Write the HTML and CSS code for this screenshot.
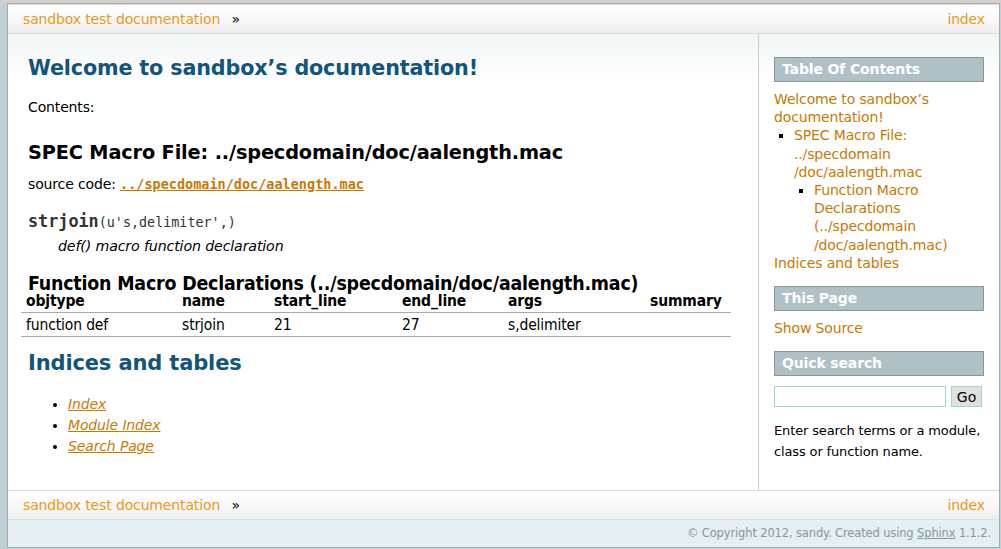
FILE: index.html
```html
<!DOCTYPE html>
<html>
<head>
<meta charset="utf-8">
<title>Welcome to sandbox's documentation! — sandbox test documentation</title>
<link rel="stylesheet" href="styles.css">
</head>
<body>
<div class="related">
  <ul>
    <li class="right"><a href="#">index</a></li>
    <li><a href="#">sandbox test documentation</a> &raquo;</li>
  </ul>
</div>
<div class="document">
  <div class="bodywrapper">
    <div class="body">
      <h1 class="title">Welcome to sandbox’s documentation!</h1>
      <p class="contents-label">Contents:</p>
      <h2 class="spec">SPEC Macro File: ../specdomain/doc/aalength.mac</h2>
      <p class="source">source code: <a href="#" class="tt-link">../specdomain/doc/aalength.mac</a></p>
      <dl class="function">
        <dt><span class="fname">strjoin</span><span class="fargs">(u's,delimiter',)</span></dt>
        <dd>def() macro function declaration</dd>
      </dl>
      <h3 class="decl">Function Macro Declarations (../specdomain/doc/aalength.mac)</h3>
      <table class="decl-table">
        <colgroup>
          <col class="c1"><col class="c2"><col class="c3"><col class="c4"><col class="c5"><col class="c6">
        </colgroup>
        <thead>
          <tr><th>objtype</th><th>name</th><th>start_line</th><th>end_line</th><th>args</th><th>summary</th></tr>
        </thead>
        <tbody>
          <tr><td>function def</td><td>strjoin</td><td>21</td><td>27</td><td>s,delimiter</td><td></td></tr>
        </tbody>
      </table>
      <h2 class="indices">Indices and tables</h2>
      <ul class="index-list">
        <li><a href="#"><em>Index</em></a></li>
        <li><a href="#"><em>Module Index</em></a></li>
        <li><a href="#"><em>Search Page</em></a></li>
      </ul>
    </div>
  </div>
  <div class="sphinxsidebar">
    <h3 class="side-h first">Table Of Contents</h3>
    <ul class="toc">
      <li><a href="#">Welcome to sandbox’s documentation!</a>
        <ul>
          <li><a href="#">SPEC Macro File: ../specdomain<br>/doc/aalength.mac</a>
            <ul>
              <li><a href="#">Function Macro Declarations (../specdomain<br>/doc/aalength.mac)</a></li>
            </ul>
          </li>
        </ul>
      </li>
      <li><a href="#">Indices and tables</a></li>
    </ul>
    <h3 class="side-h">This Page</h3>
    <ul class="toc">
      <li><a href="#">Show Source</a></li>
    </ul>
    <h3 class="side-h">Quick search</h3>
    <form class="search">
      <input type="text" class="search-input">
      <button type="button" class="search-go">Go</button>
    </form>
    <p class="searchtip">Enter search terms or a module, class or function name.</p>
  </div>
</div>
<div class="related bottom">
  <ul>
    <li class="right"><a href="#">index</a></li>
    <li><a href="#">sandbox test documentation</a> &raquo;</li>
  </ul>
</div>
<div class="footer">© Copyright 2012, sandy. Created using <a href="#">Sphinx</a> 1.1.2.</div>
</body>
</html>
```
FILE: styles.css
```css
html {
  background-color: #BFD1D4;
  border-top: 3px solid #d3d0c9;
  margin: 0;
  padding: 0;
}
body {
  font-family: "DejaVu Sans", Verdana, sans-serif;
  font-size: 14px;
  letter-spacing: -0.01em;
  line-height: 150%;
  color: black;
  margin: 0 1px 0 7px;
  padding: 0;
  border: 1px solid #aaa;
  background: white;
}
a {
  color: #CA7900;
  text-decoration: none;
}

/* related bars */
.related ul {
  list-style: none;
  margin: 0;
  padding: 0 0 0 10px;
  height: 28px;
  border-top: 1px solid #ddd;
  border-bottom: 1px solid #ddd;
  background: linear-gradient(#ffffff 0%, #f7f7f7 60%, #ededed 100%);
  font-size: 14px;
  line-height: 28px;
}
.related li {
  float: left;
  height: 28px;
}
.related li.right {
  float: right;
  margin-right: 9px;
}
.related a {
  color: #EE9816;
  padding: 0 5px;
  margin-right: 2px;
}
.related li.right a {
  margin-right: 0;
}
.related ul::after {
  content: "";
  display: block;
  clear: both;
}

/* document */
.document {
  display: flex;
  background: linear-gradient(#f1f5f6 0px, #ffffff 50px);
}
.bodywrapper {
  flex: 1;
  border-right: 1px solid #ccc;
}
.body {
  padding: 7px 20px 20px 20px;
}
h1.title {
  margin: 0;
  padding: 12px 0 5px 0;
  font-size: 20.7px;
  line-height: 31px;
  color: #11557C;
}
.contents-label {
  margin: 8px 0 14px;
}
h2.spec {
  font-size: 19.3px;
  margin: 21px 0 7px;
  line-height: 28px;
}
.source {
  margin: 0 0 15px;
}
.tt-link {
  font-family: "DejaVu Sans Mono", monospace;
  font-weight: bold;
  font-size: 13.5px;
  text-decoration: underline;
  letter-spacing: 0;
}
dl.function {
  margin: 0;
}
dl.function dt {
  line-height: 22px;
}
.fname {
  font-family: "DejaVu Sans Mono", monospace;
  font-weight: bold;
  font-size: 16.8px;
  color: #333;
  letter-spacing: 0;
}
.fargs {
  font-family: "DejaVu Sans Mono", monospace;
  font-size: 13.4px;
  color: #333;
  letter-spacing: 0;
}
dl.function dd {
  margin: 0 0 0 30px;
  font-style: italic;
  font-size: 14.2px;
  line-height: 24px;
}
h3.decl {
  font-family: "DejaVu Sans Condensed", "DejaVu Sans", sans-serif;
  font-size: 19.4px;
  margin: 17px 0 0;
  line-height: 17px;
  letter-spacing: -0.01em;
}
table.decl-table {
  border-collapse: collapse;
  margin-left: -7px;
  width: 710px;
  font-family: "DejaVu Sans Condensed", "DejaVu Sans", sans-serif;
  font-size: 15.5px;
}
col.c1 { width: 156px; }
col.c2 { width: 92px; }
col.c3 { width: 128px; }
col.c4 { width: 106px; }
col.c5 { width: 142px; }
col.c6 { width: 86px; }
.decl-table th {
  text-align: left;
  padding: 0 5px 2px;
  line-height: 18px;
  border-bottom: 1px solid #aaa;
  font-weight: bold;
}
.decl-table td {
  padding: 3px 5px 1px;
  line-height: 19px;
  border-bottom: 1px solid #aaa;
}
h2.indices {
  font-size: 21px;
  color: #11557C;
  margin: 12px 0 17px;
  line-height: 28px;
}
ul.index-list {
  margin: 0 0 13px;
  padding-left: 40px;
}
ul.index-list a {
  text-decoration: underline;
}

/* sidebar */
.sphinxsidebar {
  width: 210px;
  padding: 7px 15px 15px 15px;
  flex: none;
}
.side-h {
  margin: 14px 0 8px;
  font-size: 14px;
  line-height: 21px;
  padding: 1px 0 1px 7px;
  color: white;
  border: 1px solid #86989B;
  background-color: #AFC1C4;
}
.side-h.first {
  margin-top: 16px;
}
ul.toc {
  list-style: none;
  margin: 0;
  padding: 0;
  line-height: 130%;
}
ul.toc ul {
  list-style: square;
  margin: 0 0 0 20px;
  padding: 0;
}
ul.toc li::marker {
  font-size: 13px;
}
.search {
  display: flex;
  gap: 5px;
  margin: 10px 0 0;
}
.search-input {
  width: 168px;
  height: 17px;
  margin: 0;
  padding: 1px;
  border: 1px solid #98dbcc;
  background: white;
}
.search-go {
  width: 31px;
  height: 21px;
  margin: 0;
  padding: 0;
  border: 1px solid #98dbcc;
  background: #e0e0dc;
  font-family: "DejaVu Sans", sans-serif;
  font-size: 14px;
  color: black;
}
.searchtip {
  font-size: 13px;
  line-height: 21px;
  margin: 13px 0 0;
}

/* footer */
.footer {
  background-color: #E3EFF1;
  color: #86989B;
  padding: 3px 8px 3px 0;
  font-size: 11.5px;
  line-height: 21px;
  text-align: right;
}
.footer a {
  color: #86989B;
  text-decoration: underline;
}
```
